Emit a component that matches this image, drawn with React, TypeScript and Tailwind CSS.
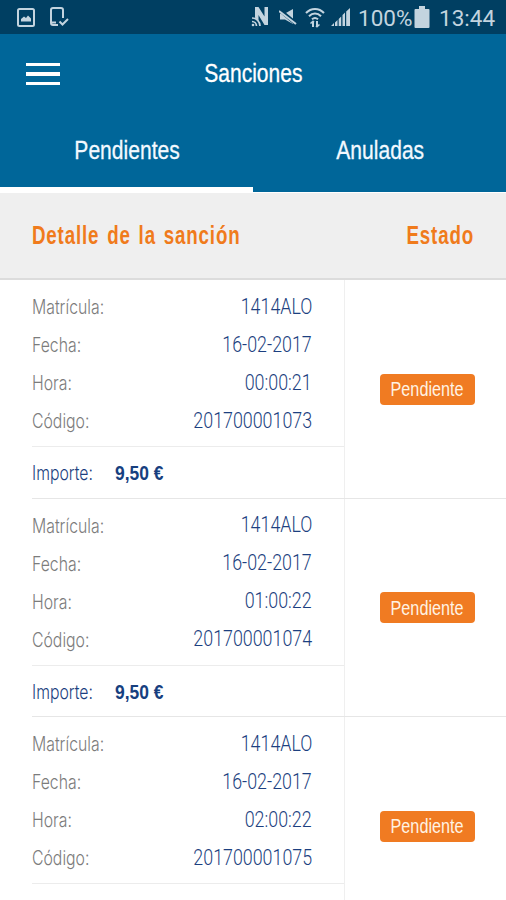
import React, { useState } from "react";

type Sanction = {
  plate: string;
  date: string;
  time: string;
  code: string;
  amount?: string;
};

const sanctions: Sanction[] = [
  { plate: "1414ALO", date: "16-02-2017", time: "00:00:21", code: "201700001073", amount: "9,50 €" },
  { plate: "1414ALO", date: "16-02-2017", time: "01:00:22", code: "201700001074", amount: "9,50 €" },
  { plate: "1414ALO", date: "16-02-2017", time: "02:00:22", code: "201700001075" },
];

function StatusBar() {
  return (
    <div className="flex h-[34px] shrink-0 items-center bg-[#003f62] text-[#c3d4df]">
      <svg className="ml-[17px] h-[19px] w-[18px]" viewBox="0 0 18 19" fill="none" stroke="currentColor" strokeWidth="2">
        <rect x="1" y="1" width="16" height="17" rx="1.5" />
        <path d="M4 13.500V11l3-2.500 2 1.500 2-2.500 3 3v3z" fill="currentColor" stroke="none" />
      </svg>
      <svg className="ml-[14px] h-[20px] w-[20px]" viewBox="0 0 20 20" fill="none" stroke="currentColor" strokeWidth="2">
        <path d="M14 11V3a2 2 0 0 0-2-2H4a2 2 0 0 0-2 2v13a2 2 0 0 0 2 2h5M2 15.500h5M10.500 14.500l3 3 5.500-5.500" />
      </svg>
      <svg className="ml-auto h-[22px] w-[20px]" viewBox="0 0 20 22" fill="none" stroke="currentColor">
        <path d="M4 1h3.500l6 9.500V1H17v18h-3.500L7.500 9v6L4 11.500z" fill="currentColor" stroke="none" />
        <path d="M1 12a8 8 0 0 1 8 8M1 15.500a4.500 4.500 0 0 1 4.500 4.500" strokeWidth="1.700" />
        <circle cx="2" cy="19" r="1.300" fill="currentColor" stroke="none" />
      </svg>
      <svg className="ml-[8px] h-[18px] w-[18px]" viewBox="0 0 18 18" fill="currentColor">
        <path d="M1 5.500h5L14 1v15l-8-4.500H1z" />
        <path d="M0 1.500l18 15" stroke="#003f62" strokeWidth="4" />
        <path d="M0 3l17 13" stroke="currentColor" strokeWidth="2" />
      </svg>
      <svg className="ml-[8px] h-[21px] w-[20px]" viewBox="0 0 20 21" fill="none" stroke="currentColor" strokeWidth="2">
        <path d="M1 6c5-5.500 13-5.500 18 0M4 9.300c3.500-3.700 8.500-3.700 12 0M7 12.200c2-1.700 4-1.700 6 0" />
        <path d="M8 20v-5M12 14v5" strokeWidth="2" />
        <path d="M5.500 16.500L8 14.200l1 1M14.500 17.500L12 19.800l-1-1" strokeWidth="1.500" />
      </svg>
      <svg className="ml-[6px] h-[19px] w-[19px]" viewBox="0 0 19 19" fill="currentColor">
        <path d="M0 18l3-3v3zM4 14.500l2.500-2.500v6H4zM7.700 11l2.500-2.500V18H7.700zM11.500 7L14 4.500V18h-2.500zM15.200 3.500L19 0v18h-3.800z" />
      </svg>
      <span className="ml-[8px] w-[55px] whitespace-nowrap pt-[3px] font-['Roboto',sans-serif] text-[22.5px] leading-[31px]">
        100%
      </span>
      <svg className="ml-[1px] h-[22px] w-[16px]" viewBox="0 0 16 22" fill="currentColor">
        <path d="M5 0h6v3h3.500q1 0 1 1v17q0 1-1 1h-13q-1 0-1-1V4q0-1 1-1H5z" />
      </svg>
      <span className="mr-[12px] ml-[9px] w-[55px] whitespace-nowrap pt-[3px] font-['Roboto',sans-serif] text-[22.5px] leading-[31px]">
        13:44
      </span>
    </div>
  );
}

function Field({ label, value }: { label: string; value: string }) {
  return (
    <div className="flex h-[38px] items-center justify-between pr-8 font-light">
      <span className="inline-block origin-left scale-x-[0.79] whitespace-nowrap font-['Inter',sans-serif] text-[20px] text-[#7c7c7c]">
        {label}
      </span>
      <span className="inline-block origin-right scale-x-[0.83] whitespace-nowrap font-['Roboto',sans-serif] text-[21.5px] text-[#1c3f80]">
        {value}
      </span>
    </div>
  );
}

function SanctionRow({ item }: { item: Sanction }) {
  return (
    <div className="ml-8 flex h-[218.6px] shrink-0 border-b border-[#e6e6e6]">
      <div className="w-[313px] shrink-0 border-r border-[#efefef] pt-[8px]">
        <Field label="Matrícula:" value={item.plate} />
        <Field label="Fecha:" value={item.date} />
        <Field label="Hora:" value={item.time} />
        <Field label="Código:" value={item.code} />
        <div className="mt-[6px] flex h-[52px] items-center border-t border-[#ececec] pt-px">
          {item.amount && (
            <>
              <span className="inline-block w-[83px] origin-left scale-x-[0.79] whitespace-nowrap font-['Inter',sans-serif] text-[20px] font-light text-[#1c3f80]">
                Importe:
              </span>
              <span className="inline-block origin-left scale-x-[0.83] whitespace-nowrap text-[21px] font-bold text-[#17407f]">
                {item.amount}
              </span>
            </>
          )}
        </div>
      </div>
      <div className="flex flex-1 items-center justify-center pt-px pl-[3px]">
        <div className="flex h-[31px] w-[95px] items-center justify-center rounded-[4px] bg-[#f07b22]">
          <span className="inline-block scale-x-[0.81] whitespace-nowrap text-[20px] text-[#fff3e4]">Pendiente</span>
        </div>
      </div>
    </div>
  );
}

export default function App() {
  const [tab, setTab] = useState<"pending" | "cancelled">("pending");

  return (
    <div className="flex h-[900px] w-[506px] flex-col overflow-hidden bg-white font-['Liberation_Sans',sans-serif]">
      <StatusBar />
      <header className="flex h-[78px] shrink-0 items-center bg-[#006699] pt-[2px] text-white">
        <button className="ml-[26px] flex w-[34px] flex-col gap-[6px]" aria-label="Menú">
          <span className="h-[3.5px] bg-white" />
          <span className="h-[3.5px] bg-white" />
          <span className="h-[3.5px] bg-white" />
        </button>
        <h1 className="mr-[60px] flex flex-1 justify-center">
          <span className="inline-block scale-x-[0.84] text-[25px] [-webkit-text-stroke:0.3px]">Sanciones</span>
        </h1>
      </header>
      <nav className="flex h-20 shrink-0 bg-[#006699] text-[26px] text-[#f3f9ff] [-webkit-text-stroke:0.3px]">
        <button
          onClick={() => setTab("pending")}
          className={`flex flex-1 items-center justify-center border-b-[5px] pt-[2px] pl-px ${
            tab === "pending" ? "border-white" : "border-[#006699]"
          }`}
        >
          <span className="inline-block scale-x-[0.81]">Pendientes</span>
        </button>
        <button
          onClick={() => setTab("cancelled")}
          className={`flex flex-1 items-center justify-center border-b-[5px] pt-[2px] pl-px ${
            tab === "cancelled" ? "border-white" : "border-[#006699]"
          }`}
        >
          <span className="inline-block scale-x-[0.81]">Anuladas</span>
        </button>
      </nav>
      <div className="flex h-[88px] shrink-0 items-center justify-between border-t border-b-2 border-t-white border-b-[#dcdcdc] bg-[#efefef] px-8 text-[25px] font-bold tracking-[1.1px] text-[#f07b1c]">
        <span className="inline-block origin-left scale-x-[0.75] whitespace-nowrap [word-spacing:2.5px]">
          Detalle de la sanción
        </span>
        <span className="inline-block origin-right scale-x-[0.75] whitespace-nowrap">Estado</span>
      </div>
      {sanctions.map((item) => (
        <SanctionRow key={item.code} item={item} />
      ))}
    </div>
  );
}
